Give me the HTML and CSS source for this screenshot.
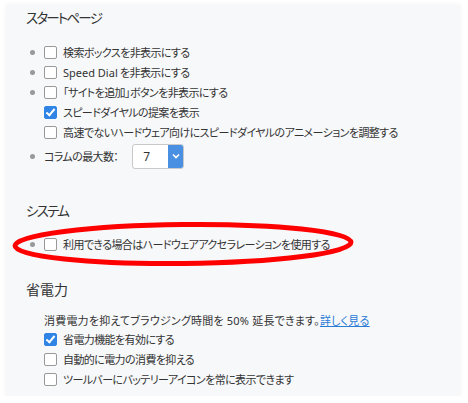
FILE: index.html
```html
<!DOCTYPE html>
<html lang="ja">
<head>
  <meta charset="UTF-8" />
  <meta name="viewport" content="width=device-width, initial-scale=1.0"/>
  <title>設定</title>
  <link rel="stylesheet" href="styles.css">
</head>
<body>
  <div class="panel">
    <h2 class="title kana first">スタートページ</h2>
    <div class="section start">
      <div class="opt"><span class="dot"></span><span class="box"></span>検索ボックスを非表示にする</div>
      <div class="opt"><span class="dot"></span><span class="box"></span><span class="latin">Speed Dial</span>&nbsp;を非表示にする</div>
      <div class="opt"><span class="dot"></span><span class="box"></span>「サイトを追加」ボタンを非表示にする</div>
      <div class="opt"><span class="box checked"></span>スピードダイヤルの提案を表示</div>
      <div class="opt"><span class="box"></span>高速でないハードウェア向けにスピードダイヤルのアニメーションを調整する</div>
      <div class="opt cols">
        <span class="dot"></span>コラムの最大数：
        <div class="select">
          <span class="val">7</span>
          <span class="arrow">
            <svg width="8" height="6" viewBox="0 0 8 6"><path d="M1 1.5 L4 4.5 L7 1.5" fill="none" stroke="#fff" stroke-width="1.6"/></svg>
          </span>
        </div>
      </div>
    </div>

    <h2 class="title kana sys">システム</h2>
    <div class="section hw">
      <div class="opt"><span class="dot"></span><span class="box"></span>利用できる場合はハードウェアアクセラレーションを使用する</div>
      <svg class="circle" width="360" height="52" viewBox="0 0 360 52">
        <ellipse cx="176" cy="26" rx="168" ry="19.5" transform="rotate(-0.6 176 26)" fill="none" stroke="#f00" stroke-width="5"/>
      </svg>
    </div>

    <h2 class="title power">省電力</h2>
    <div class="section">
      <p class="desc">消費電力を抑えてブラウジング時間を 50% 延長できます。<a href="#">詳しく見る</a></p>
      <div class="opt"><span class="box checked"></span>省電力機能を有効にする</div>
      <div class="opt"><span class="box"></span>自動的に電力の消費を抑える</div>
      <div class="opt"><span class="box"></span>ツールバーにバッテリーアイコンを常に表示できます</div>
    </div>
  </div>
</body>
</html>
```

FILE: styles.css
```css
body {
  margin: 0;
  background: #fff;
  font-family: "Noto Sans", "Noto Sans CJK JP", sans-serif;
  font-feature-settings: "palt";
  color: #333;
}
.panel {
  margin: 5px 8px 0 6px;
  height: 391px;
  padding-left: 20px;
  background: #f7f8fa;
  box-shadow: 0 0 5px rgba(0,0,0,0.06);
  overflow: hidden;
}
.title {
  margin: 0;
  font-size: 14px;
  font-weight: normal;
  line-height: 20px;
  color: #333;
}
.title.kana {
  font-size: 13.5px;
  letter-spacing: -1.8px;
}
.title.first {
  padding-top: 3px;
}
.title.sys {
  margin-top: 31px;
}
.title.power {
  margin-top: 26px;
}
.section {
  padding-left: 18px;
}
.start {
  margin-top: 14px;
}
.opt {
  display: flex;
  align-items: center;
  height: 20px;
  font-size: 11px;
  letter-spacing: -0.6px;
  white-space: nowrap;
}
.latin {
  letter-spacing: 0;
}
.dot {
  width: 5px;
  height: 5px;
  border-radius: 50%;
  background: #999;
  margin-left: -14px;
  margin-right: 9px;
  flex: none;
}
.box {
  width: 11px;
  height: 11px;
  border: 1px solid #999;
  border-radius: 2px;
  background: #fff;
  margin-right: 6px;
  flex: none;
  position: relative;
}
.box.checked {
  background: #2f84e6;
  border-color: #2f84e6;
}
.box.checked::after {
  content: "";
  position: absolute;
  left: 3px;
  top: 0px;
  width: 3px;
  height: 7px;
  border: solid #fff;
  border-width: 0 2px 2px 0;
  transform: rotate(40deg);
}
.opt.cols {
  height: 28px;
}
.select {
  display: flex;
  width: 50px;
  height: 23px;
  margin-left: 14px;
  border: 1px solid #c9c9c9;
  border-radius: 3px;
  background: #fff;
  overflow: hidden;
  letter-spacing: 0;
}
.val {
  flex: 1;
  padding-left: 10px;
  line-height: 23px;
  font-size: 12px;
}
.arrow {
  width: 15px;
  background: #4a90e2;
  display: flex;
  align-items: center;
  justify-content: center;
}
.hw {
  margin-top: 13px;
  position: relative;
}
.circle {
  position: absolute;
  left: -19px;
  top: -16px;
  pointer-events: none;
}
.desc {
  margin: 13px 0 0;
  font-size: 11px;
  letter-spacing: 0.2px;
  line-height: 16px;
  white-space: nowrap;
}
.desc a {
  color: #2a7bd6;
  text-decoration: underline;
}
```
